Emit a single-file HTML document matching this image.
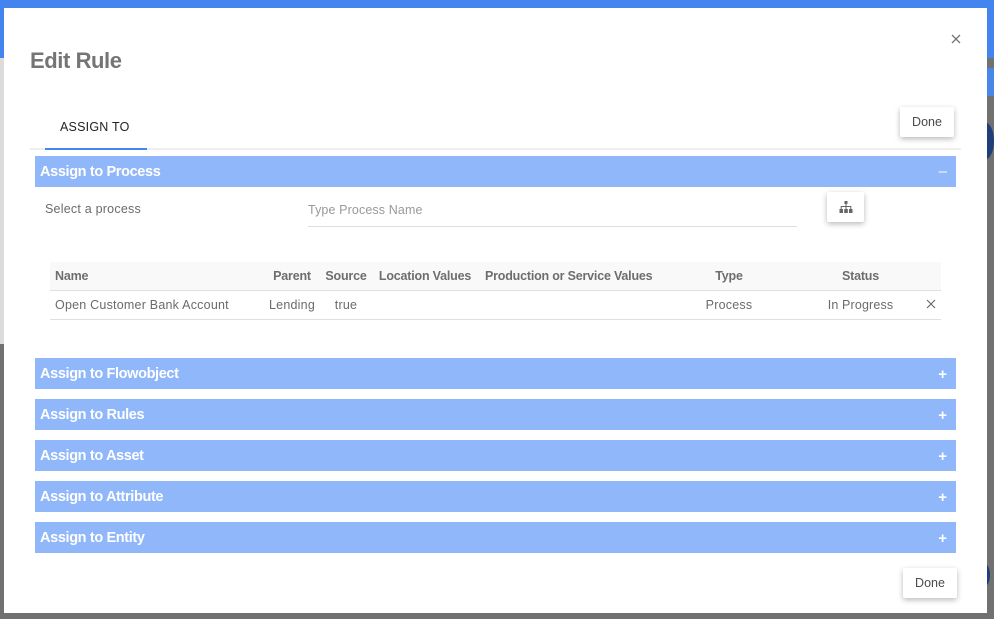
<!DOCTYPE html>
<html><head><meta charset="utf-8"><style>
html,body{margin:0;padding:0;width:994px;height:619px;overflow:hidden;background:#717171;font-family:"Liberation Sans",sans-serif}
.a{position:absolute}
.t{position:absolute;white-space:nowrap;font-size:12.5px;line-height:16px;color:#6b6b6b;letter-spacing:.22px}
.h{font-weight:bold;color:#6e6e6e;letter-spacing:-.2px}
.c{transform:translateX(-50%)}
.bar{position:absolute;left:35px;width:921px;height:31px;background:#90b7f9;color:#fff;font-weight:bold;font-size:14.5px;letter-spacing:-.36px;line-height:31px;text-indent:5px}
.bar b{position:relative;top:1px;font-weight:bold}
.bar span{position:absolute;right:9px;top:1px;text-indent:0;letter-spacing:0;font-weight:bold;font-size:15px}
.btn{position:absolute;background:#fff;border-radius:2px;box-shadow:0 2px 6px rgba(0,0,0,.28);font-size:12.5px;color:#4a4a4a;text-align:center}
</style></head><body>
<div class="a" style="left:0;top:0;width:994px;height:58px;background:#4484ee"></div>
<div class="a" style="left:0;top:58px;width:4px;height:286px;background:#dcdcdc"></div>
<div class="a" style="left:987px;top:68px;width:7px;height:28px;background:#4a86e8"></div>
<div class="a" style="left:975px;top:122px;width:19px;height:38px;border-radius:50%;background:#203f7a"></div>
<div class="a" style="left:980px;top:564px;width:10px;height:22px;border-radius:50%;background:#203f7a"></div>
<div class="a" style="left:4px;top:8px;width:983px;height:605px;background:#fff"></div>

<div class="t" style="left:30px;top:48px;font-size:22px;letter-spacing:-.42px;line-height:26px;font-weight:bold;color:#757575">Edit Rule</div>
<svg class="a" style="left:951px;top:34px" width="10" height="10" viewBox="0 0 10 10"><path d="M1 1L9 9M9 1L1 9" stroke="#777" stroke-width="1.3" fill="none"/></svg>

<div class="t" style="left:60px;top:119px;color:#222">ASSIGN TO</div>
<div class="a" style="left:30px;top:148px;width:931px;height:2px;background:#eee"></div>
<div class="a" style="left:45px;top:148px;width:102px;height:2px;background:#4285f4"></div>
<div class="btn" style="left:900px;top:107px;width:54px;height:30px;line-height:30px">Done</div>

<div class="bar" style="top:156px"><b>Assign to Process</b><span style="top:0;right:9px;font-weight:normal">&#8211;</span></div>
<div class="t" style="left:45px;top:201px">Select a process</div>
<div class="t" style="left:308px;top:202px;color:#999;letter-spacing:.12px">Type Process Name</div>
<div class="a" style="left:308px;top:226px;width:489px;height:1px;background:#ddd"></div>
<div class="btn" style="left:827px;top:192px;width:37px;height:30px"></div>
<svg class="a" style="left:839px;top:200px" width="14" height="14" viewBox="0 0 14 14"><path d="M5.500 1h3v3h-3zM0.500 9h3.500v4h-3.500zM5.200 9h3.600v4h-3.600zM10 9h3.500v4h-3.500z" fill="#666"/><path d="M7 4v5M2.200 9V6.500h9.600V9" stroke="#666" fill="none"/></svg>

<div class="a" style="left:50px;top:262px;width:891px;height:28px;background:#f9f9f9"></div>
<div class="a" style="left:50px;top:290px;width:891px;height:1px;background:#e0e0e0"></div>
<div class="a" style="left:50px;top:319px;width:891px;height:1px;background:#e0e0e0"></div>
<div class="t h" style="left:55px;top:268px">Name</div>
<div class="t h c" style="left:292px;top:268px">Parent</div>
<div class="t h c" style="left:346px;top:268px">Source</div>
<div class="t h c" style="left:425px;top:268px">Location Values</div>
<div class="t h" style="left:485px;top:268px">Production or Service Values</div>
<div class="t h c" style="left:729px;top:268px">Type</div>
<div class="t h c" style="left:860.500px;top:268px">Status</div>
<div class="t" style="left:55px;top:297px">Open Customer Bank Account</div>
<div class="t c" style="left:292px;top:297px">Lending</div>
<div class="t c" style="left:346px;top:297px">true</div>
<div class="t c" style="left:729px;top:297px">Process</div>
<div class="t c" style="left:860.500px;top:297px;letter-spacing:.15px">In Progress</div>
<svg class="a" style="left:926px;top:299px" width="10" height="10" viewBox="0 0 10 10"><path d="M1 1L9 9M9 1L1 9" stroke="#666" stroke-width="1.1" fill="none"/></svg>

<div class="bar" style="top:358px"><b>Assign to Flowobject</b><span>+</span></div>
<div class="bar" style="top:399px"><b>Assign to Rules</b><span>+</span></div>
<div class="bar" style="top:440px"><b>Assign to Asset</b><span>+</span></div>
<div class="bar" style="top:481px"><b>Assign to Attribute</b><span>+</span></div>
<div class="bar" style="top:522px"><b>Assign to Entity</b><span>+</span></div>
<div class="btn" style="left:903px;top:568px;width:54px;height:30px;line-height:30px">Done</div>
</body></html>
